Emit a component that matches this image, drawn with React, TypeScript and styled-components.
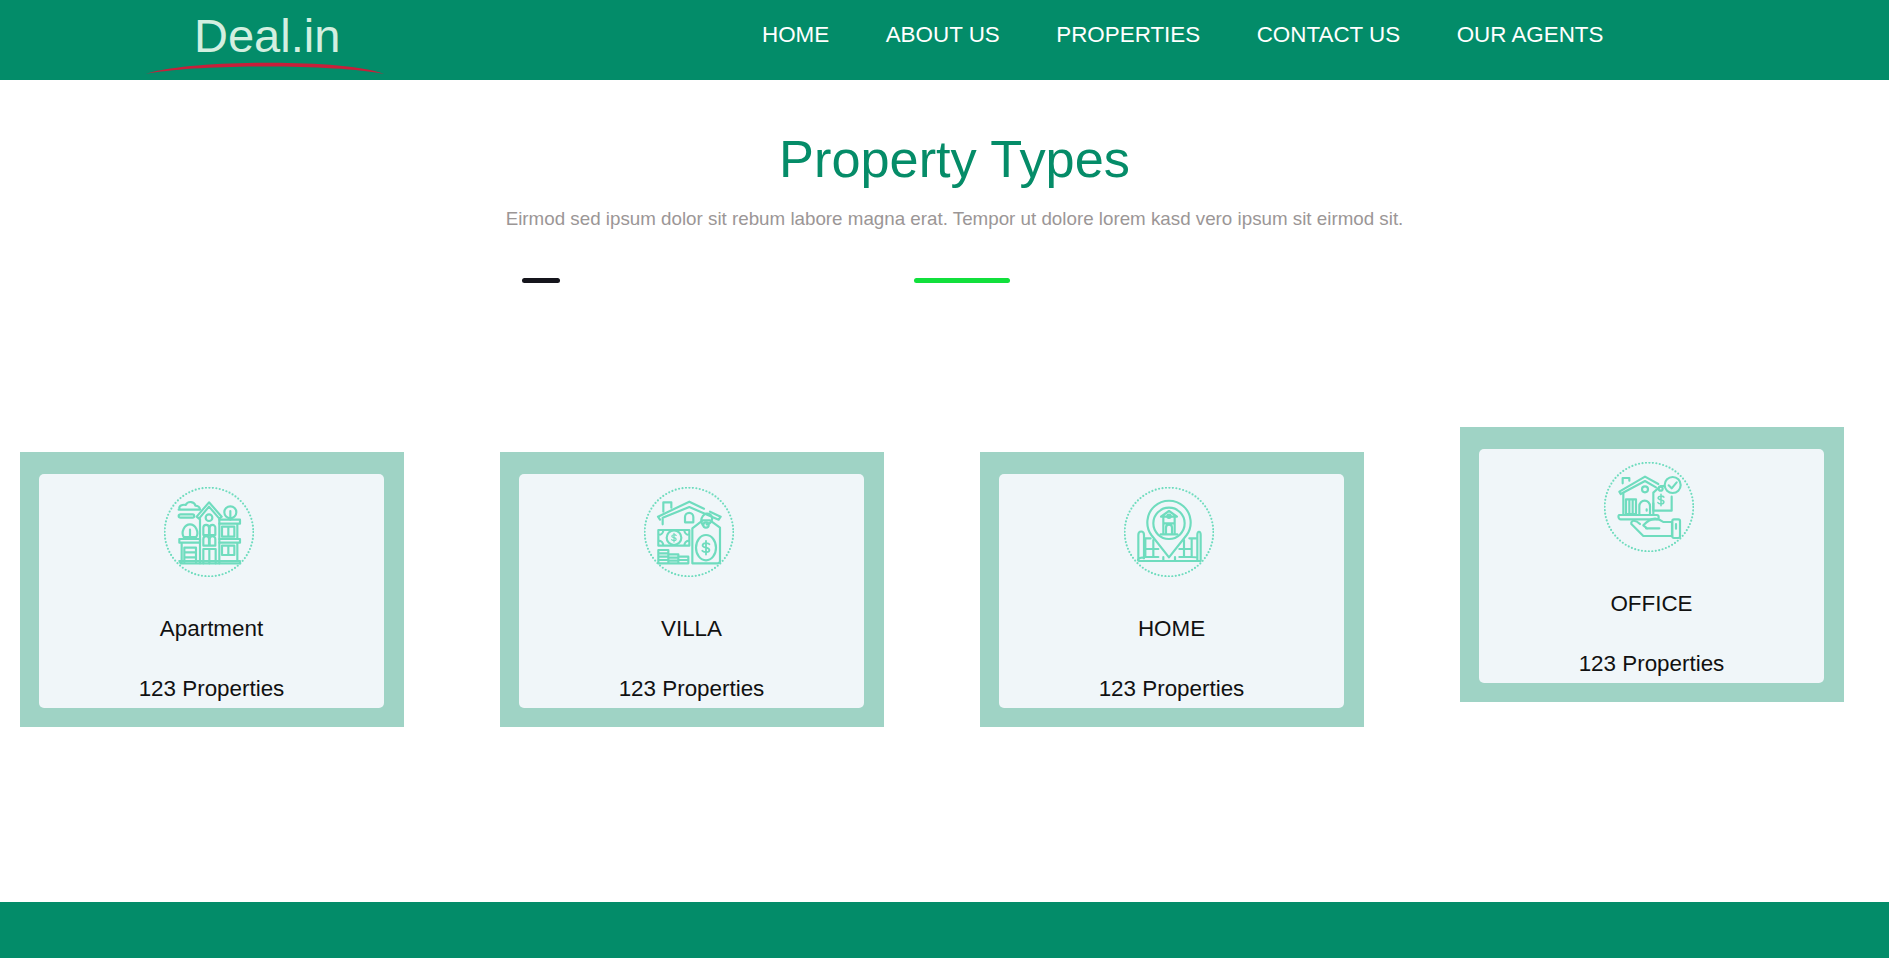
import React from 'react';
import styled, { createGlobalStyle } from 'styled-components';

const Global = createGlobalStyle`
  html, body { margin: 0; padding: 0; background: #fff; }
  body { font-family: "Liberation Sans", Arial, sans-serif; }
`;

const Page = styled.div`
  display: flex;
  flex-direction: column;
  height: 958px;
  overflow: hidden;
`;

const Header = styled.header`
  flex: none;
  height: 80px;
  background: #038c69;
  display: flex;
  align-items: flex-start;
  padding-left: 194px;
  box-sizing: border-box;
`;

const Brand = styled.div`
  position: relative;
  width: 568px;
  padding-top: 8px;
  font-size: 47px;
  line-height: 55px;
  color: #d3efe0;
`;

const Swoosh = styled.svg`
  position: absolute;
  left: -48px;
  top: 60px;
  width: 238px;
  height: 15px;
`;

const Nav = styled.nav`
  display: flex;
  gap: 56.5px;
  height: 70px;
  align-items: center;
`;

const NavLink = styled.a`
  font-size: 22.4px;
  color: #fff;
  white-space: nowrap;
`;

const Main = styled.main`
  flex: 1;
  padding-left: 20px;
`;

const Title = styled.h1`
  margin: 46px 0 0;
  font-size: 52.3px;
  line-height: 66px;
  font-weight: 400;
  text-align: center;
  color: #058c68;
`;

const Sub = styled.p`
  margin: 15px 0 0;
  font-size: 18.78px;
  line-height: 24px;
  text-align: center;
  color: #9b9696;
`;

const Bars = styled.div`
  display: flex;
  align-items: flex-start;
  gap: 354px;
  margin: 47px 0 0 502px;
`;

const Bar = styled.span<{ $w: number; $c: string }>`
  display: block;
  width: ${p => p.$w}px;
  height: 5px;
  border-radius: 3px;
  background: ${p => p.$c};
`;

const Cards = styled.div`
  display: grid;
  grid-template-columns: repeat(4, 384px);
  gap: 96px;
  margin-top: 169px;
`;

const Card = styled.article<{ $raised?: boolean }>`
  background: #9fd3c5;
  padding: 22px 20px 19px 19px;
  margin-top: ${p => (p.$raised ? -25 : 0)}px;
  margin-bottom: ${p => (p.$raised ? 25 : 0)}px;
`;

const Inner = styled.div`
  height: 234px;
  box-sizing: border-box;
  background: #f0f6f9;
  border-radius: 5px;
  padding-top: 13px;
  color: #111;
`;

const Icon = styled.svg`
  display: block;
  width: 90px;
  height: 90px;
  margin-left: 125px;
  fill: none;
  stroke: #6fdcbe;
  stroke-width: 6.5;
  stroke-linecap: round;
  stroke-linejoin: round;
  filter: blur(0.3px);
`;

const Label = styled.h3`
  margin: 38px 0 0;
  font-size: 22.4px;
  line-height: 27px;
  font-weight: 400;
  text-align: center;
`;

const Count = styled.p`
  margin: 33px 0 0;
  font-size: 22.4px;
  line-height: 27px;
  text-align: center;
`;

const Footer = styled.footer`
  flex: none;
  height: 56px;
  background: #038c69;
`;

const Ring = () => (
  <circle cx="177" cy="171" r="133" strokeDasharray="0 10.45" strokeWidth="6.5" />
);

const Dollar = ({ x, y, s = 1 }: { x: number; y: number; s?: number }) => (
  <g transform={`translate(${x} ${y}) scale(${s})`}>
    <path d="M12-12C8-18-12-18-12-8c0 10 24 6 24 16 0 10-20 10-25 3M0-24V24" />
  </g>
);

const ApartmentIcon = () => (
  <Icon viewBox="42 36 270 270">
    <Ring />
    <path d="M140 125 177 82l38 43-7 6-31-36-30 36zM150 131V265M208 131V265" />
    <circle cx="177" cy="128" r="10" />
    <path d="M160 180V158A8.500 8.500 0 0 1 177 158V180zM179 180V158A8.500 8.500 0 0 1 196 158V180zM160 212V192A8.500 8.500 0 0 1 177 192V212zM179 212V192A8.500 8.500 0 0 1 196 192V212z" />
    <path d="M160 265V222H197V265M178 222V265" />
    <path d="M208 134H270V146H208M262 146V192M208 192H270V203H208M262 203V255M216 155H253V185H216zM235 155V185M216 212H253V240H216zM235 212V240M88 258H270V265H92z" />
    <circle cx="241" cy="112" r="18" />
    <path d="M241 108V134" />
    <path d="M101 186C92 170 104 148 120 148 136 148 148 170 139 186zM120 164V192" />
    <path d="M88 192H150V203H88zM95 203V262M103 262V218H138V262M103 232H138M103 247H138" />
    <path d="M86 104H150M90 104C82 92 100 88 107 90 114 76 134 80 136 92 144 92 150 98 150 104M92 118H128C134 118 134 128 128 128H92C84 128 84 118 92 118Z" />
  </Icon>
);

const VillaIcon = () => (
  <Icon viewBox="42 36 270 270">
    <Ring />
    <path d="M90 134 84 125 178 80 222 101M240 110 272 125 266 134 178 96 98 128V148" />
    <path d="M100 110V82H124V98" />
    <path d="M165 142V126A12 12 0 0 1 190 126V142z" />
    <path d="M85 165H178V212H85zM85 180C95 180 100 172 100 165M85 197C95 197 100 205 100 212M178 180C168 180 163 172 163 165M178 197C168 197 163 205 163 212" />
    <circle cx="132" cy="188" r="22" />
    <Dollar x={132} y={188} s={0.55} />
    <path d="M85 225H115V265H85zM85 235H115M85 245H115M85 255H115M115 238H145V265H115M115 248H145M115 257H145M145 245H175V265H145M145 255H175" />
    <path d="M187 265V160L218 136H240L270 158V258Q270 265 262 265z" />
    <path d="M218 150C206 130 225 108 240 118 252 128 246 146 230 148" />
    <circle cx="228" cy="150" r="8" />
    <ellipse cx="228" cy="218" rx="30" ry="38" />
    <Dollar x={228} y={218} s={0.85} />
  </Icon>
);

const HomeIcon = () => (
  <Icon viewBox="42 36 270 270">
    <Ring />
    <path d="M177 247 124 180A65 65 0 1 1 230 180Z" />
    <circle cx="177" cy="145" r="47" />
    <path d="M153 125 177 108 201 125H153M160 125V178M194 125V178M152 178H202M168 178V158A9 9 0 0 1 186 158V178M160 145H194" />
    <circle cx="177" cy="124" r="5" />
    <path d="M85 255V180C85 166 102 166 102 180V250M102 190H122M85 255C85 248 100 246 102 250M262 255V180C262 166 272 168 272 180V258H88Q82 258 85 250M262 190H238M262 250C262 246 250 246 245 246H208M106 190V246H145M105 222H145M130 195V246M208 222H245M222 195V246M245 190V246" />
    <path d="M160 246V258M195 246V258" />
  </Icon>
);

const OfficeIcon = () => (
  <Icon viewBox="42 36 270 270">
    <Ring />
    <path d="M88 125 165 80 205 102M92 132 165 93 198 112M88 125 92 132" />
    <path d="M98 100V84H118V92" />
    <circle cx="165" cy="118" r="9" />
    <path d="M100 130V195M190 160V195M108 192V148H138V192zM118 148V192M128 148V192M148 195V168A16 16 0 0 1 180 168V195M170 178V182" />
    <path d="M88 195H200C208 195 208 208 200 208H92C84 208 84 195 88 195Z" />
    <path d="M190 182V128L212 108H222M245 140V182H190" />
    <circle cx="212" cy="116" r="6" />
    <Dollar x={213} y={150} s={0.72} />
    <circle cx="248" cy="105" r="24" />
    <path d="M236 106 245 115 260 97" />
    <path d="M208 235H168M150 222C136 208 122 210 124 222L160 258H246V216H220C200 200 180 204 160 226L172 236" />
    <rect x="247" y="208" width="23" height="56" rx="5" />
    <path d="M258 222V236" />
  </Icon>
);

const cards = [
  { label: 'Apartment', icon: <ApartmentIcon /> },
  { label: 'VILLA', icon: <VillaIcon /> },
  { label: 'HOME', icon: <HomeIcon /> },
  { label: 'OFFICE', icon: <OfficeIcon />, raised: true },
];

const links = ['HOME', 'ABOUT US', 'PROPERTIES', 'CONTACT US', 'OUR AGENTS'];

export default function App() {
  return (
    <Page>
      <Global />
      <Header>
        <Brand>
          Deal.in
          <Swoosh viewBox="0 0 238 15">
            <path d="M0 14C40 0 198 -2 238 14C190 4 50 4 0 14Z" fill="#c81f3a" />
          </Swoosh>
        </Brand>
        <Nav>
          {links.map(l => (
            <NavLink key={l}>{l}</NavLink>
          ))}
        </Nav>
      </Header>
      <Main>
        <Title>Property Types</Title>
        <Sub>Eirmod sed ipsum dolor sit rebum labore magna erat. Tempor ut dolore lorem kasd vero ipsum sit eirmod sit.</Sub>
        <Bars>
          <Bar $w={38} $c="#15151c" />
          <Bar $w={96} $c="#11e03c" />
        </Bars>
        <Cards>
          {cards.map(c => (
            <Card key={c.label} $raised={c.raised}>
              <Inner>
                {c.icon}
                <Label>{c.label}</Label>
                <Count>123 Properties</Count>
              </Inner>
            </Card>
          ))}
        </Cards>
      </Main>
      <Footer />
    </Page>
  );
}
